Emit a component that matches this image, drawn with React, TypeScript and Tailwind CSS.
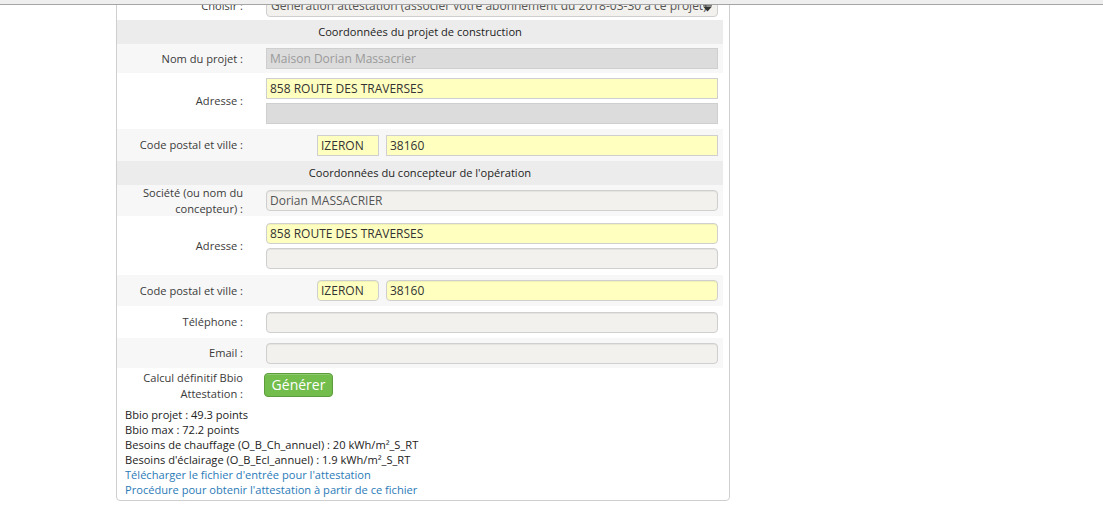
import React from "react";

type Field = {
  value?: string;
  tone: "disabled" | "yellow" | "soft";
  rounded?: boolean;
};

const font = { fontFamily: '"Open Sans", "Liberation Sans", sans-serif' };

function Input({ value = "", tone, rounded }: Field) {
  const toneCls =
    tone === "yellow"
      ? "bg-[#ffffc0] text-[#333]"
      : tone === "disabled"
      ? "bg-[#dcdcdc] text-[#9a9a9a]"
      : "bg-[#f2f1ee] text-[#555]";
  return (
    <div
      className={`h-[21px] w-full border border-[#cfcfcf] px-[3px] text-[12px] leading-[19px] whitespace-nowrap overflow-hidden ${toneCls} ${
        rounded ? "rounded-[4px] shadow-[inset_0_1px_1px_rgba(0,0,0,0.06)]" : ""
      }`}
    >
      {value}
    </div>
  );
}

function Row({
  label,
  gray,
  children,
  className = "",
}: {
  label: React.ReactNode;
  gray?: boolean;
  children: React.ReactNode;
  className?: string;
}) {
  return (
    <div className={`flex items-center ${gray ? "bg-[#f7f7f7]" : "bg-white"} ${className}`}>
      <div className="w-[126px] text-right text-[11.1px] leading-[16px] text-[#3a3a3a]">{label}</div>
      <div className="ml-[23px] w-[452px] flex flex-col gap-[4px]">{children}</div>
    </div>
  );
}

function Header({ title }: { title: string }) {
  return (
    <div className="h-[24px] bg-[#ececec] text-center text-[11.1px] leading-[23px] text-[#222]">
      {title}
    </div>
  );
}

function PostalRow({ rounded, gray, h }: { rounded?: boolean; gray?: boolean; h: string }) {
  return (
    <Row label="Code postal et ville :" gray={gray} className={h}>
      <div className="flex gap-[7px] pl-[51px]">
        <div className="w-[62px]">
          <Input value="IZERON" tone="yellow" rounded={rounded} />
        </div>
        <div className="flex-1">
          <Input value="38160" tone="yellow" rounded={rounded} />
        </div>
      </div>
    </Row>
  );
}

export default function App() {
  return (
    <div className="relative h-[527px] w-[1103px] overflow-hidden bg-white" style={font}>
      <div className="absolute left-0 right-0 top-0 z-10 h-[5px] bg-[#efefef] border-b border-[#a5a5a5]" />

      <div className="ml-[116px] -mt-[9px] w-[614px] rounded-b-[4px] border border-[#cfcfcf] pr-[6px] pb-[3px]">
        <Row label="Choisir :" className="h-[28px]">
          <div className="relative flex h-[22px] items-center rounded-[4px] border border-[#cfcfcf] bg-[#f2f1ee] pl-[4px] pr-[16px] text-[12px] text-[#555] whitespace-nowrap overflow-hidden">
            Génération attestation (associer votre abonnement du 2018-03-30 à ce projet)
            <svg className="absolute right-[5px] top-[8px]" width="9" height="8" viewBox="0 0 9 8">
              <rect x="0" y="0" width="9" height="1.6" fill="#333" />
              <path d="M0 2.5h9L4.5 7.5z" fill="#333" />
            </svg>
          </div>
        </Row>

        <Header title="Coordonnées du projet de construction" />
        <Row label="Nom du projet :" gray className="h-[29px]">
          <Input value="Maison Dorian Massacrier" tone="disabled" />
        </Row>
        <Row label="Adresse :" className="h-[56px]">
          <Input value="858 ROUTE DES TRAVERSES" tone="yellow" />
          <Input tone="disabled" />
        </Row>
        <PostalRow gray h="h-[32px]" />

        <Header title="Coordonnées du concepteur de l'opération" />
        <Row
          label={
            <>
              Société (ou nom du
              <br />
              concepteur) :
            </>
          }
          gray
          className="h-[31px]"
        >
          <Input value="Dorian MASSACRIER" tone="soft" rounded />
        </Row>
        <Row label="Adresse :" className="h-[59px]">
          <Input value="858 ROUTE DES TRAVERSES" tone="yellow" rounded />
          <Input tone="soft" rounded />
        </Row>
        <PostalRow rounded gray h="h-[31px]" />
        <Row label="Téléphone :" className="h-[32px]">
          <Input tone="soft" rounded />
        </Row>
        <Row label="Email :" gray className="h-[30px]">
          <Input tone="soft" rounded />
        </Row>
        <Row
          label={
            <>
              Calcul définitif Bbio
              <br />
              Attestation :
            </>
          }
          className="h-[35px]"
        >
          <div className="-ml-[2px] -mt-[3px]">
            <button className="h-[24px] w-[69px] rounded-[4px] border border-[#5d9d3c] bg-[#72bd4b] text-[14px] leading-[22px] text-white shadow-[inset_0_1px_0_rgba(255,255,255,0.2)]">
              Générer
            </button>
          </div>
        </Row>

        <div className="pl-[8px] pt-[4px] text-[11.1px] leading-[15px] text-[#222]">
          <div>Bbio projet : 49.3 points</div>
          <div>Bbio max : 72.2 points</div>
          <div>Besoins de chauffage (O_B_Ch_annuel) : 20 kWh/m²_S_RT</div>
          <div>Besoins d'éclairage (O_B_Ecl_annuel) : 1.9 kWh/m²_S_RT</div>
          <a className="block text-[#2a7ab8]">Télécharger le fichier d'entrée pour l'attestation</a>
          <a className="block text-[#2a7ab8]">Procédure pour obtenir l'attestation à partir de ce fichier</a>
        </div>
      </div>
    </div>
  );
}
